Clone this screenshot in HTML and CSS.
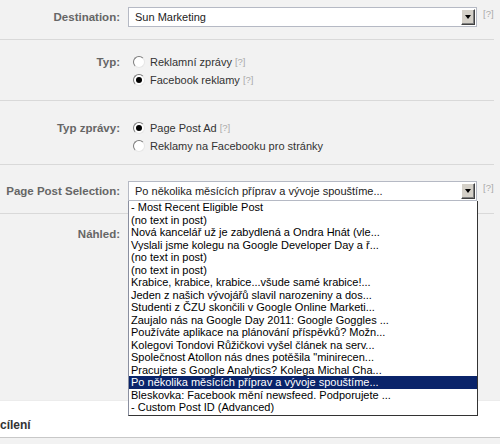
FILE: index.html
```html
<!DOCTYPE html>
<html lang="cs">
  <head>
    <meta charset="UTF-8" />
    <title>Vytvořit reklamu</title>
    <link rel="stylesheet" href="styles.css">
  </head>
  <body>
    <div class="form">
      <div class="row row-dest">
        <div class="label label-select">Destination:</div>
        <div class="field">
          <div class="select">
            <span class="select-text">Sun Marketing</span>
            <span class="select-btn"></span>
          </div>
          <span class="help">[?]</span>
        </div>
      </div>

      <div class="row row-type">
        <div class="label">Typ:</div>
        <div class="field field-col">
          <label class="radio-line"><span class="radio"></span>Reklamní zprávy <span class="help">[?]</span></label>
          <label class="radio-line"><span class="radio checked"></span>Facebook reklamy <span class="help">[?]</span></label>
        </div>
      </div>

      <div class="row row-msg">
        <div class="label">Typ zprávy:</div>
        <div class="field field-col">
          <label class="radio-line"><span class="radio checked"></span>Page Post Ad <span class="help">[?]</span></label>
          <label class="radio-line"><span class="radio"></span>Reklamy na Facebooku pro stránky</label>
        </div>
      </div>

      <div class="row row-post">
        <div class="label label-select">Page Post Selection:</div>
        <div class="field">
          <div class="select-wrap">
            <div class="select">
              <span class="select-text">Po několika měsících příprav a vývoje spouštíme...</span>
              <span class="select-btn"></span>
            </div>
            <ul class="options">
              <li>- Most Recent Eligible Post</li>
              <li>(no text in post)</li>
              <li>Nová kancelář už je zabydlená a Ondra Hnát (vle...</li>
              <li>Vyslali jsme kolegu na Google Developer Day a ř...</li>
              <li>(no text in post)</li>
              <li>(no text in post)</li>
              <li>Krabice, krabice, krabice...všude samé krabice!...</li>
              <li>Jeden z našich vývojářů slavil narozeniny a dos...</li>
              <li>Studenti z ČZU skončili v Google Online Marketi...</li>
              <li>Zaujalo nás na Google Day 2011: Google Goggles ...</li>
              <li>Používáte aplikace na plánování příspěvků? Možn...</li>
              <li>Kolegovi Tondovi Růžičkovi vyšel článek na serv...</li>
              <li>Společnost Atollon nás dnes potěšila "minirecen...</li>
              <li>Pracujete s Google Analytics? Kolega Michal Cha...</li>
              <li class="selected">Po několika měsících příprav a vývoje spouštíme...</li>
              <li>Bleskovka: Facebook mění newsfeed. Podporujete ...</li>
              <li>- Custom Post ID (Advanced)</li>
            </ul>
          </div>
          <span class="help">[?]</span>
        </div>
      </div>

      <div class="row row-preview">
        <div class="label">Náhled:</div>
        <div class="field"></div>
      </div>
    </div>

    <div class="section">
      <h3>cílení</h3>
    </div>
  </body>
</html>
```

FILE: styles.css
```css
body {
  margin: 0;
  background: #f2f2f2;
  font-family: "Liberation Sans", Arial, sans-serif;
  font-size: 11px;
  color: #333;
}

.form {
  background: #f2f2f2;
}

.row {
  display: flex;
  gap: 8px;
  margin-right: 6px;
  border-bottom: 1px solid #d9d9d9;
}

.row-dest {
  padding: 7px 0 12px;
}

.row-type {
  padding: 13px 0 11px;
}

.row-msg {
  padding: 18px 0 9px;
}

.row-post {
  padding: 16px 0 12px;
}

.row-preview {
  border-bottom: none;
  height: 175px;
  padding-top: 11px;
}

.label {
  width: 120px;
  flex: none;
  text-align: right;
  font-weight: bold;
  font-size: 11.5px;
  color: #666;
  line-height: 18px;
}

.label-select {
  line-height: 20px;
}

.field {
  display: flex;
  align-items: flex-start;
  gap: 6px;
}

.field-col {
  flex-direction: column;
  gap: 0;
  padding-left: 5px;
}

.help {
  color: #aaa;
  font-size: 9.5px;
  font-weight: normal;
  line-height: 14px;
}

.radio-line .help {
  vertical-align: 3px;
  line-height: 1;
}

/* classic win32 style combo box */
.select-wrap {
  position: relative;
}

.select {
  width: 346px;
  height: 18px;
  border: 1px solid #b5b9c4;
  background: #fff;
  display: flex;
  align-items: center;
  justify-content: space-between;
  padding-right: 1px;
}

.select-text {
  padding-left: 6px;
  color: #222;
}

.select-btn {
  width: 12px;
  height: 14px;
  background: #d4d0c8;
  border-style: solid;
  border-width: 1px;
  border-color: #fff #404040 #404040 #fff;
  box-shadow: inset -1px -1px 0 #808080;
  position: relative;
}

.select-btn::after {
  content: "";
  position: absolute;
  left: 3px;
  top: 5px;
  border-left: 3px solid transparent;
  border-right: 3px solid transparent;
  border-top: 4px solid #000;
}

.options {
  position: absolute;
  top: 20px;
  left: 0;
  width: 348px;
  margin: 0;
  padding: 0;
  list-style: none;
  background: #fff;
  border: 1px solid #333;
  border-left-color: #8a8fa0;
  border-top: none;
  color: #000;
  line-height: 12.5px;
  padding-bottom: 1px;
  z-index: 2;
}

.options li {
  padding-left: 2px;
  white-space: nowrap;
}

.options .selected {
  background: #0a246a;
  color: #fff;
}

.radio-line {
  display: flex;
  align-items: center;
  line-height: 18px;
  gap: 5px;
}

.radio-line .help {
  margin-left: -2px;
}

.radio {
  width: 10px;
  height: 10px;
  border-radius: 50%;
  border: 1px solid;
  border-color: #7a7a7a #e6e6e6 #e6e6e6 #7a7a7a;
  background: #fff;
  position: relative;
}

.radio.checked::after {
  content: "";
  position: absolute;
  left: 2px;
  top: 2px;
  width: 6px;
  height: 6px;
  border-radius: 50%;
  background: #000;
}

.section {
  background: #fff;
  border-top: 1px solid #ececec;
  border-bottom: 1px solid #c8c8c8;
  height: 36px;
}

.section h3 {
  margin: 0;
  padding-top: 17px;
  font-size: 12px;
  line-height: 14px;
  color: #333;
}
```
